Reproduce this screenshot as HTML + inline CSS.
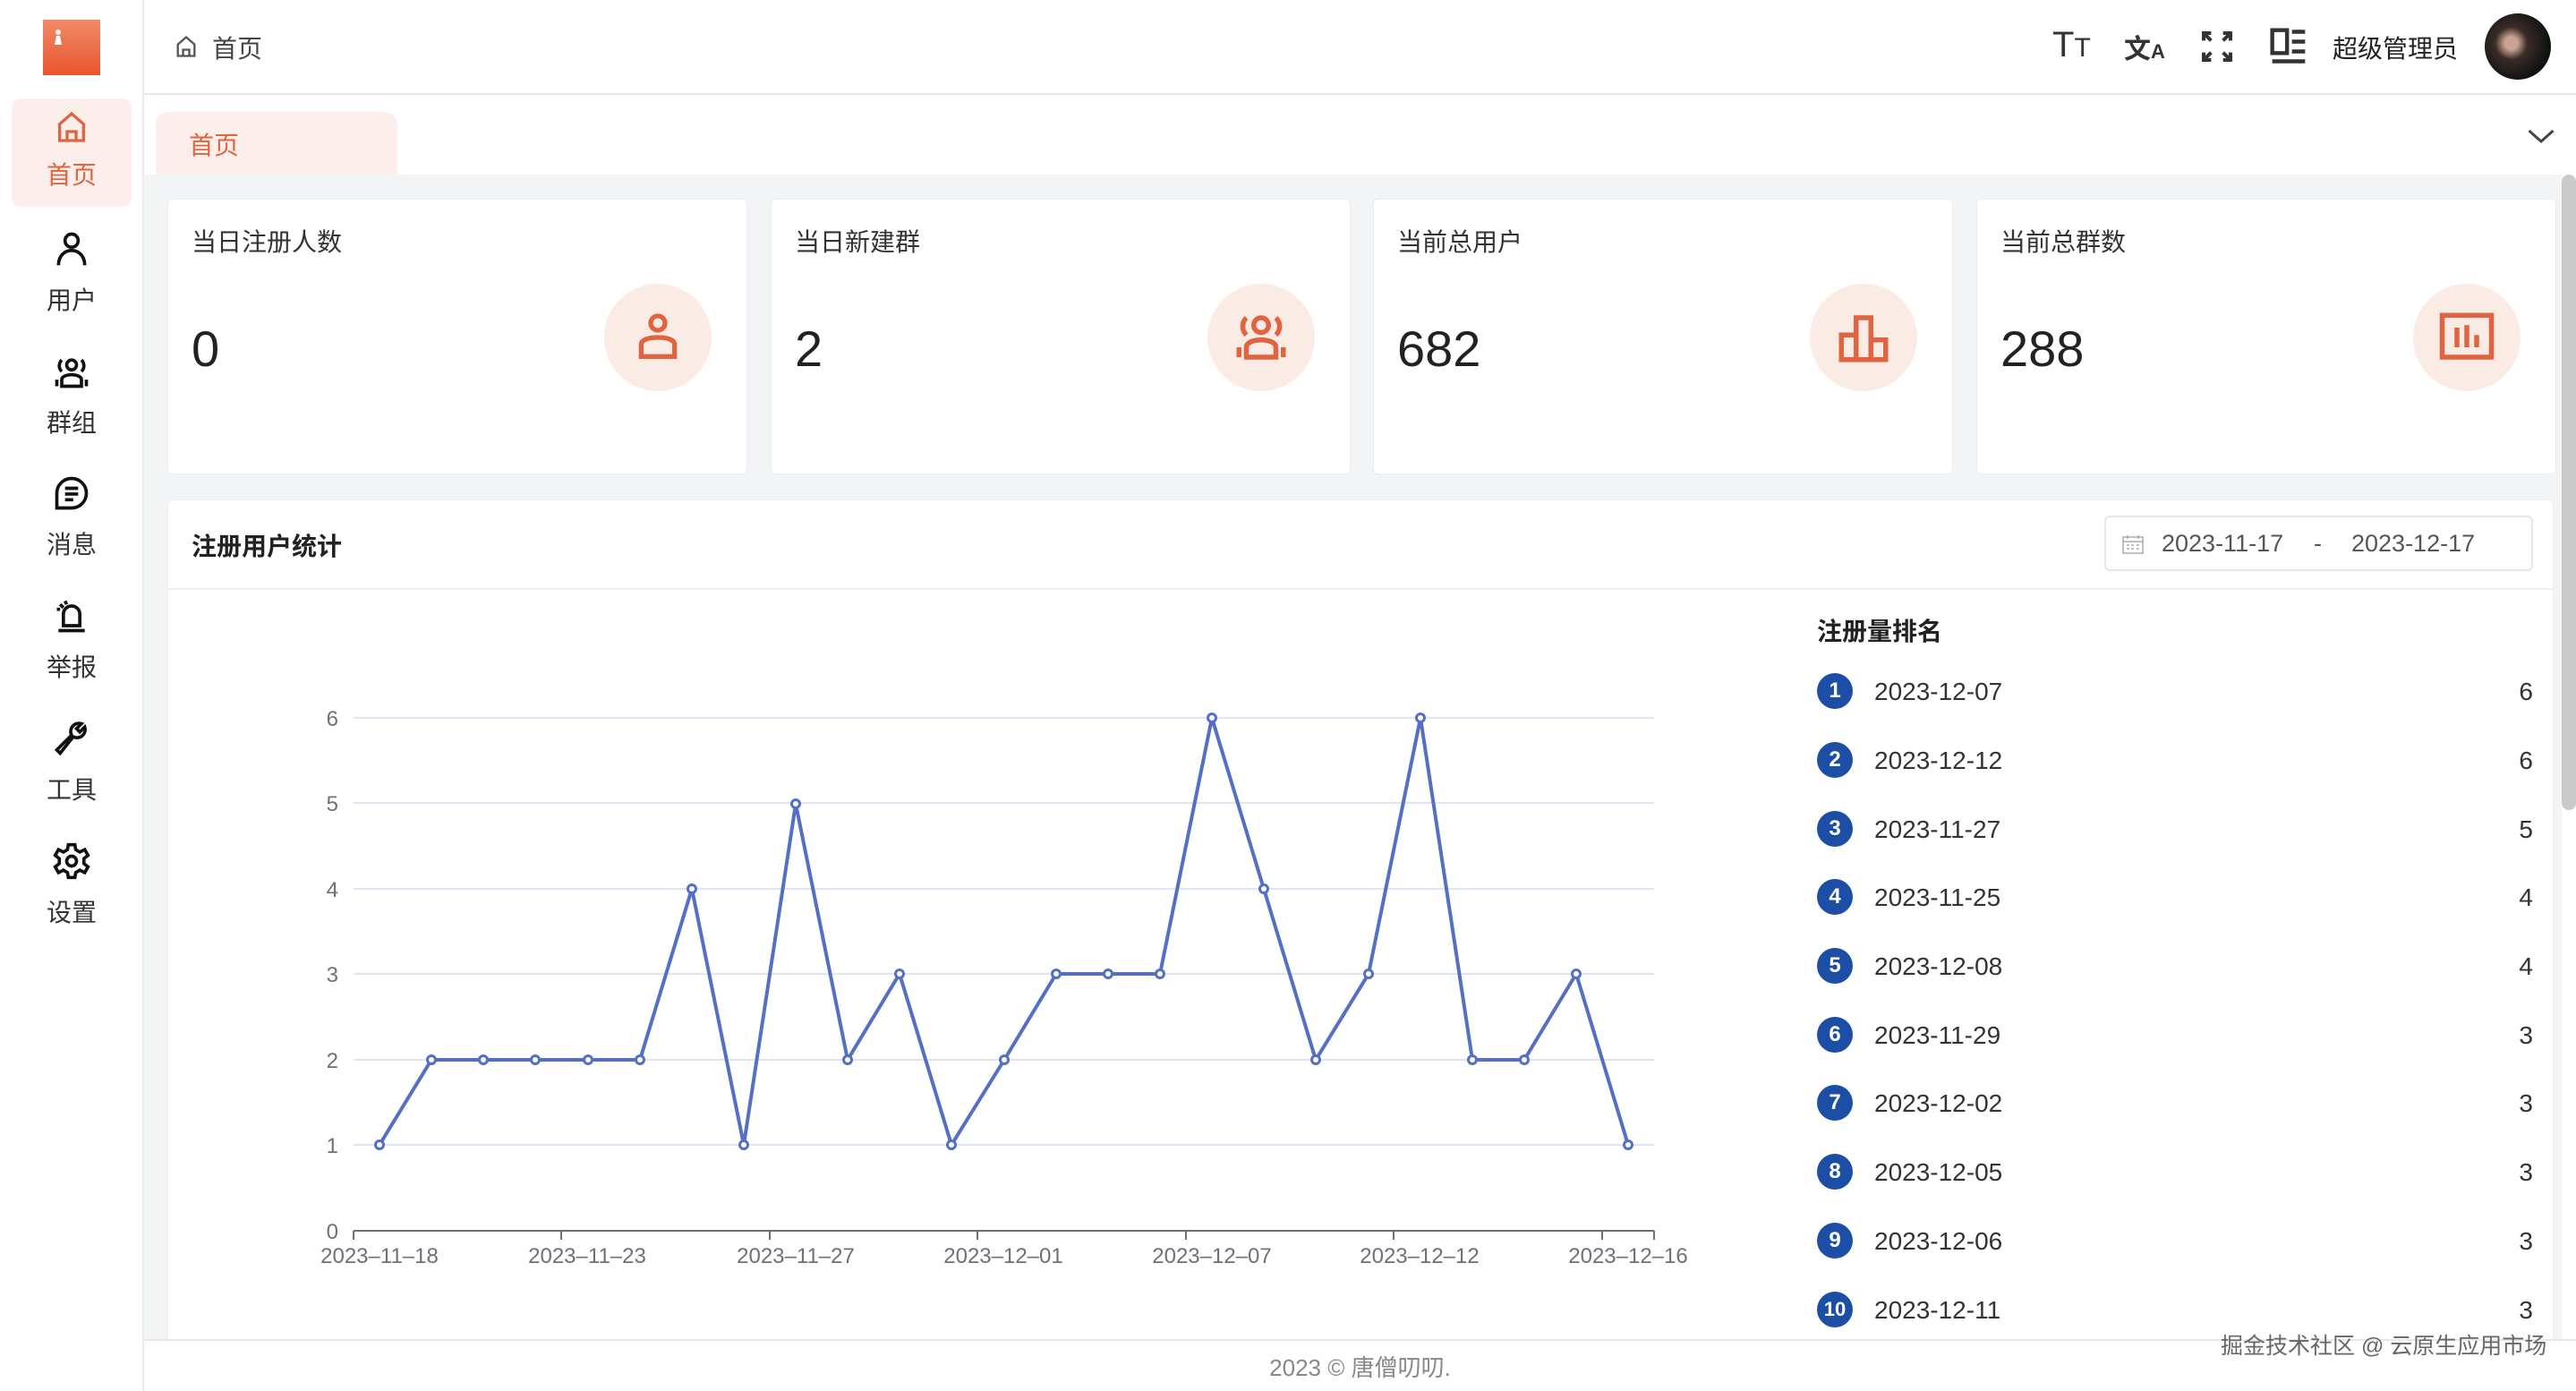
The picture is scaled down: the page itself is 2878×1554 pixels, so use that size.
<!DOCTYPE html>
<html><head><meta charset="utf-8"><style>
*{margin:0;padding:0;box-sizing:border-box}
body{width:2878px;height:1554px;overflow:hidden;background:#fff;font-family:"Liberation Sans","Noto Sans CJK SC",sans-serif;color:#333;position:relative}
.abs{position:absolute}
.side{left:0;top:0;width:161px;height:1554px;background:#fff;border-right:2px solid #ececec}
.logo{left:48px;top:22px;width:64px;height:62px;background:linear-gradient(180deg,#f08a68,#e8552e)}
.mi{position:absolute;left:13px;width:134px;height:121px;text-align:center;font-size:28px;color:#333}
.mi svg{display:block;margin:0 auto}
.mi span{display:block;margin-top:14px}
.act{background:#fcefeb;border-radius:10px;color:#e0643f}
.act span{margin-top:12px}
.hdr{left:161px;top:0;width:2717px;height:106px;border-bottom:2px solid #e8e8e8;background:#fff}
.tabs{left:161px;top:106px;width:2717px;height:89px;background:#fff}
.main{left:161px;top:195px;width:2701px;height:1301px;background:#f2f4f5}
.card{position:absolute;top:222px;width:648px;height:308px;background:#fff;border-radius:6px;border:1px solid #ebeef0}
.card .t{position:absolute;left:26px;top:26px;font-size:28px;color:#333}
.card .v{position:absolute;left:26px;top:134px;font-size:56px;color:#222}
.card .c{position:absolute;left:487px;top:94px;width:120px;height:120px;border-radius:50%;background:#fbebe5;display:flex;align-items:center;justify-content:center}
.panel{left:187px;top:558px;width:2666px;height:960px;background:#fff;border-radius:6px;border:1px solid #ebeef0}
.rk{position:absolute;left:2030px;font-size:28px;color:#333;width:800px;height:40px}
.rk .b{position:absolute;left:0;top:0;width:40px;height:40px;border-radius:50%;background:#1c4ea6;color:#fff;font-size:24px;font-weight:bold;text-align:center;line-height:40px}
.rk .d{position:absolute;left:64px;top:5px}
.rk .n{position:absolute;right:0;top:5px}
.foot{left:161px;top:1496px;width:2717px;height:58px;background:#fff;border-top:2px solid #e8e8e8}
</style></head><body>
<div class="abs side"></div>
<div class="abs logo"><svg width="64" height="62"><circle cx="17" cy="14" r="3" fill="#fff"/><path d="M13 28 L15 18 L19 18 L21 28 Z" fill="#fff"/></svg></div>
<div class="mi act" style="top:110px"><svg width="40" height="40" viewBox="0 0 24 24" style="margin-top:12px" fill="none" stroke="#e0643f" stroke-width="2"><path d="M4 21V10L12 3L20 10V21Z"/><path d="M9 21V15H15V21"/></svg><span>首页</span></div>
<div class="mi" style="top:256px"><svg width="44" height="44" viewBox="0 0 24 24" fill="none" stroke="#111" stroke-width="2"><circle cx="12" cy="7" r="4"/><path d="M4 22C4 16 8 13 12 13C16 13 20 16 20 22"/></svg><span>用户</span></div>
<div class="mi" style="top:393px"><svg width="44" height="44" viewBox="0 0 24 24" fill="none" stroke="#111" stroke-width="2"><circle cx="12" cy="8" r="3"/><path d="M6 5C4 7 4 10 6 12M18 5C20 7 20 10 18 12"/><path d="M6 21V17C6 15 9 14 12 14C15 14 18 15 18 17V21ZM3 21V17M21 21V17"/></svg><span>群组</span></div>
<div class="mi" style="top:529px"><svg width="44" height="44" viewBox="0 0 24 24" fill="none" stroke="#111" stroke-width="2"><path d="M3 21V12A9 9 0 1 1 12 21Z"/><path d="M8 9H16M8 12.5H16M8 16H13"/></svg><span>消息</span></div>
<div class="mi" style="top:666px"><svg width="44" height="44" viewBox="0 0 24 24" fill="none" stroke="#111" stroke-width="2"><path d="M7 18V11A5 5 0 0 1 17 11V18Z"/><path d="M4 21H20M5 5L7 7M8 3L9 5M3 8L5 8"/></svg><span>举报</span></div>
<div class="mi" style="top:803px"><svg width="44" height="44" viewBox="0 0 24 24" fill="none" stroke="#111" stroke-width="2"><path d="M3 19L12 10A5 5 0 0 1 18 3L15 6L17 8L20 5A5 5 0 0 1 13 11L5 21Z"/></svg><span>工具</span></div>
<div class="mi" style="top:940px"><svg width="44" height="44" viewBox="0 0 24 24" fill="none" stroke="#111" stroke-width="2"><path d="M10 2H14L14.5 5L17 6.5L20 5L22 8.5L19.5 10.5V13.5L22 15.5L20 19L17 17.5L14.5 19L14 22H10L9.5 19L7 17.5L4 19L2 15.5L4.5 13.5V10.5L2 8.5L4 5L7 6.5L9.5 5Z"/><circle cx="12" cy="12" r="3"/></svg><span>设置</span></div>

<div class="abs hdr">
 <svg class="abs" style="left:33px;top:38px" width="28" height="28" viewBox="0 0 24 24" fill="none" stroke="#555" stroke-width="2"><path d="M4 21V10L12 3L20 10V21Z"/><path d="M9 21V15H15V21"/></svg>
 <div class="abs" style="left:76px;top:33px;font-size:28px;color:#444">首页</div>
 <div class="abs" style="left:2132px;top:28px;font-size:40px;color:#333">T<span style="font-size:30px">T</span></div>
 <div class="abs" style="left:2212px;top:30px;font-size:30px;color:#333;font-weight:bold">文<span style="font-size:22px">A</span></div>
 <svg class="abs" style="left:2296px;top:32px" width="40" height="40" viewBox="0 0 24 24" fill="none" stroke="#333" stroke-width="2.4"><path d="M3 8V3H8M3 3L8 8M21 8V3H16M21 3L16 8M3 16V21H8M3 21L8 16M21 16V21H16M21 21L16 16"/></svg>
 <svg class="abs" style="left:2374px;top:30px" width="44" height="44" viewBox="0 0 24 24" fill="none" stroke="#333" stroke-width="2.4"><rect x="2" y="2" width="9" height="14"/><path d="M14 3H22M14 9H22M14 15H22M2 21H22"/></svg>
 <div class="abs" style="left:2445px;top:33px;font-size:28px;color:#222">超级管理员</div>
 <div class="abs" style="left:2615px;top:15px;width:74px;height:74px;border-radius:50%;background:radial-gradient(circle at 40% 45%,#c9a291 0 12%,#3a2c28 30%,#111 70%)"></div>
</div>
<div class="abs tabs">
 <div class="abs" style="left:13px;top:19px;width:270px;height:70px;background:#fcefeb;border-radius:14px 14px 0 0;font-size:28px;color:#e0643f;padding:16px 0 0 37px">首页</div>
 <svg class="abs" style="left:2660px;top:32px" width="36" height="28" viewBox="0 0 24 16" fill="none" stroke="#444" stroke-width="2"><path d="M3 4L12 12L21 4"/></svg>
</div>
<div class="abs main"></div>
<div class="abs" style="left:2862px;top:195px;width:16px;height:710px;background:#c9c9c9;border-radius:8px"></div>

<div class="card" style="left:187px"><div class="t">当日注册人数</div><div class="v">0</div><div class="c"><svg width="64" height="64" viewBox="0 0 24 24" fill="none" stroke="#e0643f" stroke-width="2"><circle cx="12" cy="6" r="3"/><path d="M5 20V15C5 13 8 12 12 12C16 12 19 13 19 15V20Z"/></svg></div></div>
<div class="card" style="left:861px"><div class="t">当日新建群</div><div class="v">2</div><div class="c"><svg width="66" height="66" viewBox="0 0 24 24" fill="none" stroke="#e0643f" stroke-width="2"><circle cx="12" cy="7" r="3"/><path d="M6 4C4 6 4 9 6 11M18 4C20 6 20 9 18 11"/><path d="M6 20V16C6 14 9 13 12 13C15 13 18 14 18 16V20ZM3 20V16M21 20V16"/></svg></div></div>
<div class="card" style="left:1534px"><div class="t">当前总用户</div><div class="v">682</div><div class="c"><svg width="66" height="66" viewBox="0 0 24 24" fill="none" stroke="#e0643f" stroke-width="2"><path d="M3 21V11H9V21ZM9 21V4H15V21ZM15 21V13H21V21Z"/></svg></div></div>
<div class="card" style="left:2208px"><div class="t">当前总群数</div><div class="v">288</div><div class="c"><svg width="66" height="66" viewBox="0 0 24 24" fill="none" stroke="#e0643f" stroke-width="2"><rect x="2" y="3" width="20" height="17"/><path d="M8 8V16M12 7V16M16 11V16"/></svg></div></div>

<div class="abs panel">
 <div class="abs" style="left:0;top:98px;width:2666px;height:2px;background:#eceef0"></div>
 <div class="abs" style="left:26px;top:30px;font-size:28px;font-weight:bold;color:#222">注册用户统计</div>
 <div class="abs" style="left:2163px;top:17px;width:479px;height:62px;border:2px solid #e4e7ed;border-radius:6px;font-size:27px;color:#555">
  <svg class="abs" style="left:18px;top:19px" width="24" height="22" viewBox="0 0 24 22" fill="none" stroke="#aaa" stroke-width="1.5"><rect x="1" y="3" width="22" height="18"/><path d="M1 8H23M6 1V5M18 1V5M5 12H8M10 12H13M16 12H19M5 16H8M10 16H13M16 16H19"/></svg>
  <span class="abs" style="left:62px;top:14px">2023-11-17</span>
  <span class="abs" style="left:232px;top:14px">-</span>
  <span class="abs" style="left:274px;top:14px">2023-12-17</span>
 </div>
</div>

<svg class="abs" style="left:0;top:0" width="2878" height="1554" font-family="Liberation Sans, sans-serif">
 <g stroke="#e0e6f1" stroke-width="2">
  <line x1="395" x2="1848" y1="802" y2="802"/><line x1="395" x2="1848" y1="897" y2="897"/><line x1="395" x2="1848" y1="993" y2="993"/><line x1="395" x2="1848" y1="1088" y2="1088"/><line x1="395" x2="1848" y1="1184" y2="1184"/><line x1="395" x2="1848" y1="1279" y2="1279"/>
 </g>
 <g stroke="#6e7079" stroke-width="2"><line x1="395" x2="1848" y1="1375" y2="1375"/>
  <line x1="395" x2="395" y1="1375" y2="1385"/><line x1="627" x2="627" y1="1375" y2="1385"/><line x1="860" x2="860" y1="1375" y2="1385"/><line x1="1092" x2="1092" y1="1375" y2="1385"/><line x1="1325" x2="1325" y1="1375" y2="1385"/><line x1="1557" x2="1557" y1="1375" y2="1385"/><line x1="1790" x2="1790" y1="1375" y2="1385"/><line x1="1848" x2="1848" y1="1375" y2="1385"/>
 </g>
 <g fill="#6e7079" font-size="24" text-anchor="end">
  <text x="378" y="811">6</text><text x="378" y="906">5</text><text x="378" y="1002">4</text><text x="378" y="1097">3</text><text x="378" y="1193">2</text><text x="378" y="1288">1</text><text x="378" y="1384">0</text>
 </g>
 <g fill="#6e7079" font-size="24" text-anchor="middle">
  <text x="424" y="1411">2023–11–18</text><text x="656" y="1411">2023–11–23</text><text x="889" y="1411">2023–11–27</text><text x="1121" y="1411">2023–12–01</text><text x="1354" y="1411">2023–12–07</text><text x="1586" y="1411">2023–12–12</text><text x="1819" y="1411">2023–12–16</text>
 </g>
 <polyline fill="none" stroke="#5470c6" stroke-width="4" stroke-linejoin="round" points="424,1279 482,1184 540,1184 598,1184 657,1184 715,1184 773,993 831,1279 889,898 947,1184 1005,1088 1063,1279 1122,1184 1180,1088 1238,1088 1296,1088 1354,802 1412,993 1470,1184 1529,1088 1587,802 1645,1184 1703,1184 1761,1088 1819,1279"/>
 <g fill="#fff" stroke="#5470c6" stroke-width="3">
  <circle cx="424" cy="1279" r="4.5"/><circle cx="482" cy="1184" r="4.5"/><circle cx="540" cy="1184" r="4.5"/><circle cx="598" cy="1184" r="4.5"/><circle cx="657" cy="1184" r="4.5"/><circle cx="715" cy="1184" r="4.5"/><circle cx="773" cy="993" r="4.5"/><circle cx="831" cy="1279" r="4.5"/><circle cx="889" cy="898" r="4.5"/><circle cx="947" cy="1184" r="4.5"/><circle cx="1005" cy="1088" r="4.5"/><circle cx="1063" cy="1279" r="4.5"/><circle cx="1122" cy="1184" r="4.5"/><circle cx="1180" cy="1088" r="4.5"/><circle cx="1238" cy="1088" r="4.5"/><circle cx="1296" cy="1088" r="4.5"/><circle cx="1354" cy="802" r="4.5"/><circle cx="1412" cy="993" r="4.5"/><circle cx="1470" cy="1184" r="4.5"/><circle cx="1529" cy="1088" r="4.5"/><circle cx="1587" cy="802" r="4.5"/><circle cx="1645" cy="1184" r="4.5"/><circle cx="1703" cy="1184" r="4.5"/><circle cx="1761" cy="1088" r="4.5"/><circle cx="1819" cy="1279" r="4.5"/>
 </g>
</svg>

<div class="abs" style="left:2030px;top:684px;font-size:28px;font-weight:bold;color:#222">注册量排名</div>
<div class="rk" style="top:752px"><div class="b">1</div><div class="d">2023-12-07</div><div class="n">6</div></div>
<div class="rk" style="top:829px"><div class="b">2</div><div class="d">2023-12-12</div><div class="n">6</div></div>
<div class="rk" style="top:906px"><div class="b">3</div><div class="d">2023-11-27</div><div class="n">5</div></div>
<div class="rk" style="top:982px"><div class="b">4</div><div class="d">2023-11-25</div><div class="n">4</div></div>
<div class="rk" style="top:1059px"><div class="b">5</div><div class="d">2023-12-08</div><div class="n">4</div></div>
<div class="rk" style="top:1136px"><div class="b">6</div><div class="d">2023-11-29</div><div class="n">3</div></div>
<div class="rk" style="top:1212px"><div class="b">7</div><div class="d">2023-12-02</div><div class="n">3</div></div>
<div class="rk" style="top:1289px"><div class="b">8</div><div class="d">2023-12-05</div><div class="n">3</div></div>
<div class="rk" style="top:1366px"><div class="b">9</div><div class="d">2023-12-06</div><div class="n">3</div></div>
<div class="rk" style="top:1443px"><div class="b" style="font-size:22px">10</div><div class="d">2023-12-11</div><div class="n">3</div></div>

<div class="abs foot"><div class="abs" style="left:0;width:2717px;top:10px;text-align:center;font-size:26px;color:#888">2023 © 唐僧叨叨.</div></div>
<div class="abs" style="left:2481px;top:1484px;font-size:25px;color:#666">掘金技术社区 @ 云原生应用市场</div>
</body></html>
